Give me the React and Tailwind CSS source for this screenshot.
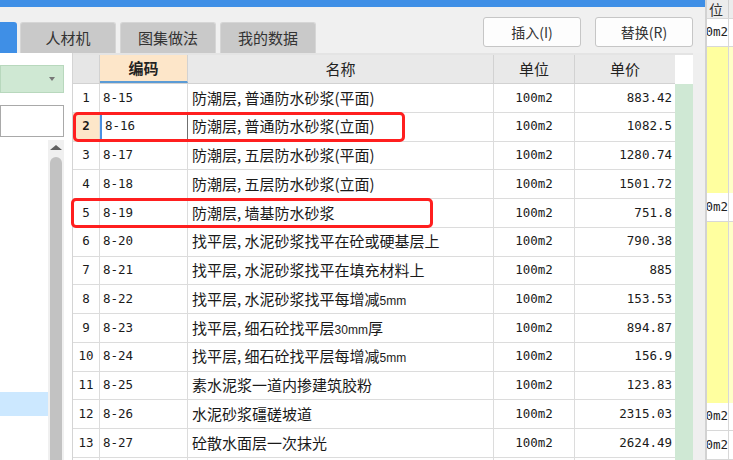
import React from 'react';

const rows = [
  ['1', '8-15', '防潮层, 普通防水砂浆(平面)', '883.42'],
  ['2', '8-16', '防潮层, 普通防水砂浆(立面)', '1082.5'],
  ['3', '8-17', '防潮层, 五层防水砂浆(平面)', '1280.74'],
  ['4', '8-18', '防潮层, 五层防水砂浆(立面)', '1501.72'],
  ['5', '8-19', '防潮层, 墙基防水砂浆', '751.8'],
  ['6', '8-20', '找平层, 水泥砂浆找平在砼或硬基层上', '790.38'],
  ['7', '8-21', '找平层, 水泥砂浆找平在填充材料上', '885'],
  ['8', '8-22', '找平层, 水泥砂浆找平每增减5mm', '153.53'],
  ['9', '8-23', '找平层, 细石砼找平层30mm厚', '894.87'],
  ['10', '8-24', '找平层, 细石砼找平层每增减5mm', '156.9'],
  ['11', '8-25', '素水泥浆一道内掺建筑胶粉', '123.83'],
  ['12', '8-26', '水泥砂浆礓磋坡道', '2315.03'],
  ['13', '8-27', '砼散水面层一次抹光', '2624.49'],
  ['', '', '', ''],
];

const grid = 'grid grid-cols-[27px_88px_306px_81px_100px]';
const mono = "font-['DejaVu_Sans_Mono',monospace]";
const cjk = "font-['Noto_Sans_CJK_SC',sans-serif]";

// "5mm" / "30mm" are drawn in a smaller face in the original
const Name = ({ text }) => (
  <span>
    {text.split(/(\d+mm)/).map((p, i) =>
      /mm$/.test(p) ? (
        <span key={i} className="font-['Liberation_Sans',sans-serif] text-[12px]">{p}</span>
      ) : (
        <span key={i}>{p}</span>
      )
    )}
  </span>
);

const Tab = ({ label }) => (
  <div className="w-[96px] h-[31px] rounded-t-[3px] bg-[#c9c9c9] border-t border-x border-[#d6d6d6] flex items-center justify-center text-[15px] text-[#333]">
    {label}
  </div>
);

const Btn = ({ label }) => (
  <button className="w-[98px] h-[30px] rounded-[3px] border border-[#c6c6c6] bg-[#fdfdfd] text-[14px] text-[#333] flex items-center justify-center">
    {label}
  </button>
);

const SideRow = ({ h, yellow }) =>
  yellow ? (
    <div className="flex" style={{ height: h }}>
      <div className="w-[21px] bg-[#ffff9f]" />
      <div className="w-px bg-[#d8d8d8]" />
      <div className="flex-1 bg-[#ffffc8]" />
    </div>
  ) : (
    <div className="flex border-b border-[#d8d8d8]" style={{ height: h }}>
      <div className={`w-[21px] overflow-hidden flex items-center justify-end whitespace-nowrap ${mono} text-[12.5px] text-[#222]`}>100m2</div>
      <div className="w-px bg-[#d8d8d8]" />
      <div className="flex-1 bg-white" />
    </div>
  );

export default function App() {
  return (
    <div className={`relative w-[733px] h-[460px] overflow-hidden flex bg-[#f0f0f0] ${cjk}`}>
      {/* main window */}
      <div className="w-[705px] flex flex-col">
        <div className="h-[7px] bg-[#3f8fe6]" />
        <div className="h-[46px] flex items-end justify-between pr-[12px]">
          <div className="flex items-end gap-[4px]">
            <div className="w-[17px] h-[31px] rounded-tr-[3px] bg-[#3f8fe6] mr-[-1px]" />
            <Tab label="人材机" />
            <Tab label="图集做法" />
            <Tab label="我的数据" />
          </div>
          <div className="flex gap-[14px] self-start mt-[10px]">
            <Btn label="插入(I)" />
            <Btn label="替换(R)" />
          </div>
        </div>

        <div className="flex-1 flex min-h-0">
          {/* left tree panel */}
          <div className="w-[73px] bg-white flex flex-col pt-[12px] border-r border-[#d4d4d4]">
            <div className="w-[64px] h-[28px] bg-[#cfe8d3] border border-[#b8d8bd] flex items-center justify-end pr-[8px]">
              <div className="w-0 h-0 border-x-[3px] border-x-transparent border-t-[4px] border-t-[#777]" />
            </div>
            <div className="w-[64px] h-[32px] mt-[12px] border border-[#a9a9a9] bg-white" />
            <div className="flex flex-1 mt-[3px] w-[64px]">
              <div className="w-[48px] pt-[252px]">
                <div className="h-[24px] bg-[#cce8ff]" />
              </div>
              <div className="w-[16px] bg-[#f0f0f0] flex flex-col items-center">
                <div className="mt-[5px] w-0 h-0 border-x-[6px] border-x-transparent border-b-[5px] border-b-[#606060]" />
                <div className="mt-[7px] w-[12px] flex-1 rounded-t-[6px] bg-[#c2c2c2]" />
              </div>
            </div>
          </div>

          {/* quota table */}
          <div className="w-[602px] bg-white border-t-2 border-[#e4e4e4] flex flex-col">
            <div className={`${grid} h-[29px] shrink-0 text-[15px] text-[#222] border-b border-[#d2d2d2]`}>
              <div className="bg-[#e6e6e6] border-r border-[#d2d2d2]" />
              <div className="bg-[#fde6c9] border-r border-[#d2d2d2] border-b-2 border-b-[#5b9bd5] flex items-center justify-center font-bold">编码</div>
              <div className="bg-[#e9e9e9] border-r border-[#d2d2d2] flex items-center justify-center">名称</div>
              <div className="bg-[#e9e9e9] border-r border-[#d2d2d2] flex items-center justify-center">单位</div>
              <div className="bg-[#e9e9e9] flex items-center justify-center">单价</div>
            </div>
            {rows.map(([no, code, name, price], idx) => {
              const sel = no === '2';
              return (
                <div key={idx} className={`${grid} h-[28.75px] shrink-0 border-b border-[#dcdcdc] text-[#1a1a1a]`}>
                  <div className={`border-r border-[#dcdcdc] flex items-center justify-center ${mono} text-[12.5px] ${sel ? 'bg-[#fde6c9] font-bold' : ''}`}>{no}</div>
                  <div className={`border-r border-[#dcdcdc] flex items-center pl-[3px] ${mono} text-[12.5px] ${sel ? 'border-l-2 border-l-[#4a90e2] pl-[1px]' : ''}`}>{code}</div>
                  <div className={`border-r border-[#dcdcdc] flex items-center pl-[4px] text-[15px] whitespace-nowrap overflow-hidden ${sel ? 'border-l border-l-[#707070] ml-[-1px]' : ''}`}>
                    <Name text={name} />
                  </div>
                  <div className={`border-r border-[#dcdcdc] flex items-center justify-center ${mono} text-[12.5px]`}>{name ? '100m2' : ''}</div>
                  <div className={`flex items-center justify-end pr-[3px] ${mono} text-[12.5px]`}>{price}</div>
                </div>
              );
            })}
          </div>

          {/* green strip and gutter */}
          <div className="w-[18px] flex flex-col border-t-2 border-[#e4e4e4]">
            <div className="h-[29px] bg-white" />
            <div className="flex-1 bg-[#cfe8d4]" />
          </div>
          <div className="w-[12px] bg-[#efefef]" />
        </div>
      </div>

      {/* neighbouring window at the right edge */}
      <div className="w-[28px] border-l-2 border-[#d2d2d2] flex flex-col bg-white">
        <div className="h-[19px] flex bg-[#ececec] border-b border-[#d8d8d8]">
          <div className="w-[21px] overflow-hidden flex items-center justify-end whitespace-nowrap text-[14px] leading-none text-[#333] pr-[5px]">位</div>
          <div className="w-px bg-[#d0d0d0]" />
          <div className="flex-1" />
        </div>
        <SideRow h="28px" />
        <SideRow h="146px" yellow />
        <SideRow h="29px" />
        <SideRow h="181px" yellow />
        <SideRow h="28px" />
        <SideRow h="29px" />
      </div>

      {/* red annotation boxes */}
      <div className="absolute left-[73px] top-[112px] w-[332px] h-[30px] border-[3px] border-[#ff1f1f] rounded-[5px]" />
      <div className="absolute left-[71px] top-[198px] w-[362px] h-[30px] border-[3px] border-[#ff1f1f] rounded-[5px]" />
    </div>
  );
}
